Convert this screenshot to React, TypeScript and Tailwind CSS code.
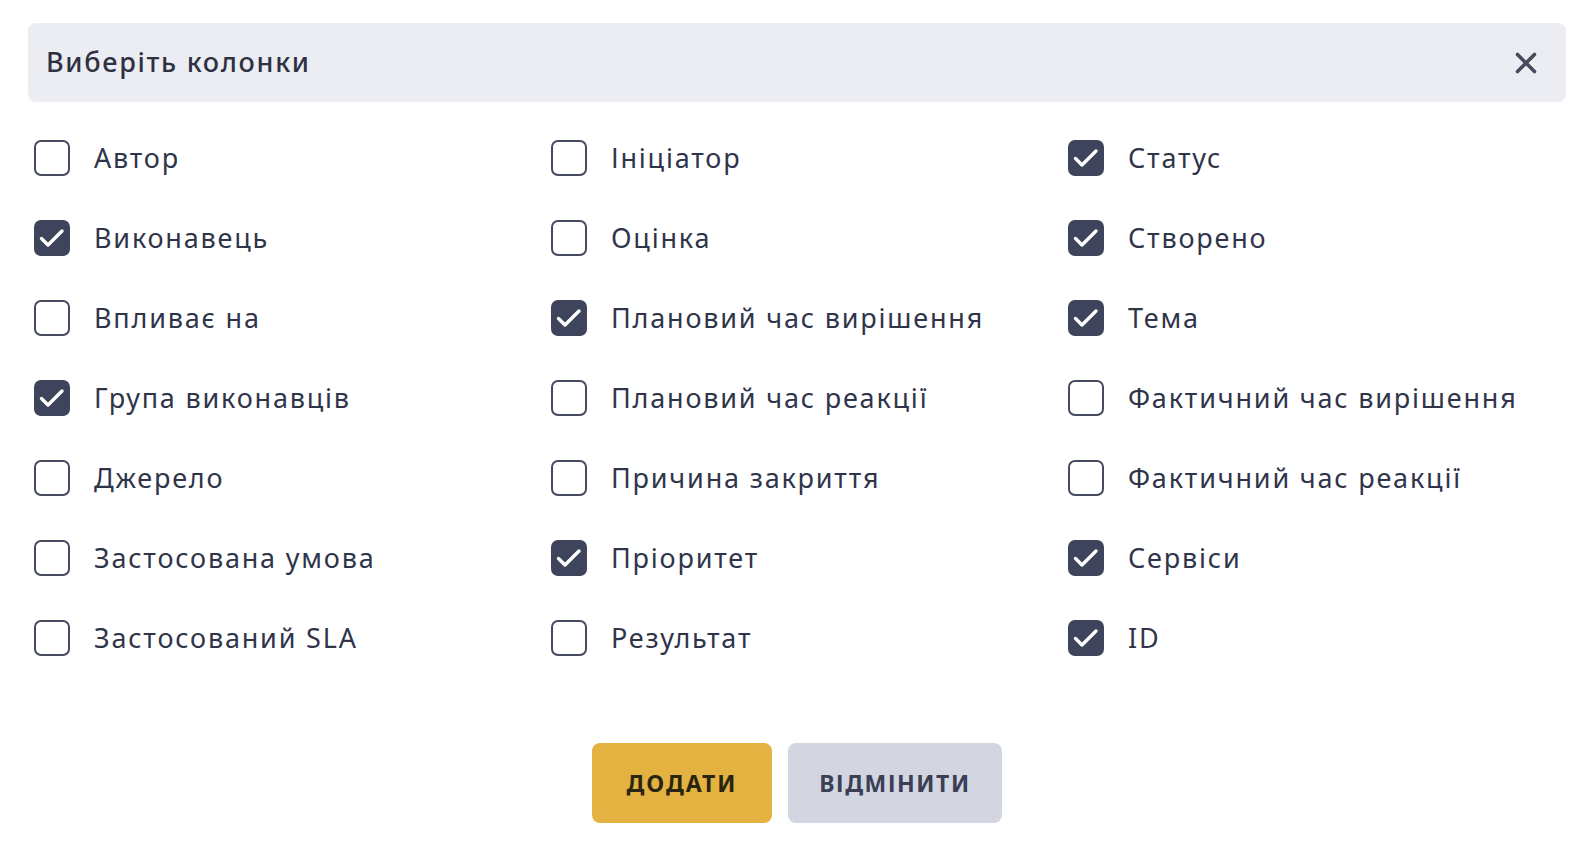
import React from "react";

const cols: [string, boolean][][] = [
  [
    ["Автор", false],
    ["Виконавець", true],
    ["Впливає на", false],
    ["Група виконавців", true],
    ["Джерело", false],
    ["Застосована умова", false],
    ["Застосований SLA", false],
  ],
  [
    ["Ініціатор", false],
    ["Оцінка", false],
    ["Плановий час вирішення", true],
    ["Плановий час реакції", false],
    ["Причина закриття", false],
    ["Пріоритет", true],
    ["Результат", false],
  ],
  [
    ["Статус", true],
    ["Створено", true],
    ["Тема", true],
    ["Фактичний час вирішення", false],
    ["Фактичний час реакції", false],
    ["Сервіси", true],
    ["ID", true],
  ],
];

function Box({ checked }: { checked: boolean }) {
  return checked ? (
    <div className="w-[36px] h-[36px] rounded-[7px] bg-[#3e445b] flex items-center justify-center shrink-0">
      <svg width="36" height="36" viewBox="0 0 36 36" fill="none" stroke="white" strokeWidth="3.4" strokeLinecap="round" strokeLinejoin="round">
        <path d="M7.5 18.5l6.5 6.5L28 11" />
      </svg>
    </div>
  ) : (
    <div className="w-[36px] h-[36px] rounded-[7px] border-2 border-[#454a5e] bg-white shrink-0" />
  );
}

export default function App() {
  const items: [string, boolean][] = [];
  for (let r = 0; r < 7; r++) for (let c = 0; c < 3; c++) items.push(cols[c][r]);
  return (
    <div className="w-full bg-white pt-[23px] pl-[28px] pb-[30px]" style={{ fontFamily: '"Noto Sans", sans-serif' }}>
      <div className="w-[1538px]">
        <div className="h-[79px] rounded-[8px] bg-[#ecedf2] flex items-center justify-between pl-[18px] pr-[29px]">
          <span className="text-[27px] font-medium text-[#2d3142] tracking-[1.7px]">Виберіть колонки</span>
          <svg width="22" height="22" viewBox="0 0 22 22" fill="none" stroke="#454a5e" strokeWidth="3.6" strokeLinecap="round">
            <path d="M2.5 2.5l17 17M19.5 2.5l-17 17" />
          </svg>
        </div>
        <div className="grid grid-cols-[517px_517px_498px] pl-[6px] pt-[38px] gap-y-[44px]">
          {items.map(([label, checked], i) => (
            <div key={i} className="flex items-center gap-[24px] h-[36px]">
              <Box checked={checked} />
              <span className="text-[27px] text-[#30344a] tracking-[1.8px] whitespace-nowrap">{label}</span>
            </div>
          ))}
        </div>
        <div className="flex justify-center gap-[16px] pt-[87px]">
          <button className="w-[180px] h-[80px] rounded-[8px] bg-[#e3b240] text-[#2a2412] text-[23px] font-bold tracking-[2px]">ДОДАТИ</button>
          <button className="w-[214px] h-[80px] rounded-[8px] bg-[#d3d5e0] text-[#3a3f55] text-[23px] font-bold tracking-[1.6px]">ВІДМІНИТИ</button>
        </div>
      </div>
    </div>
  );
}
